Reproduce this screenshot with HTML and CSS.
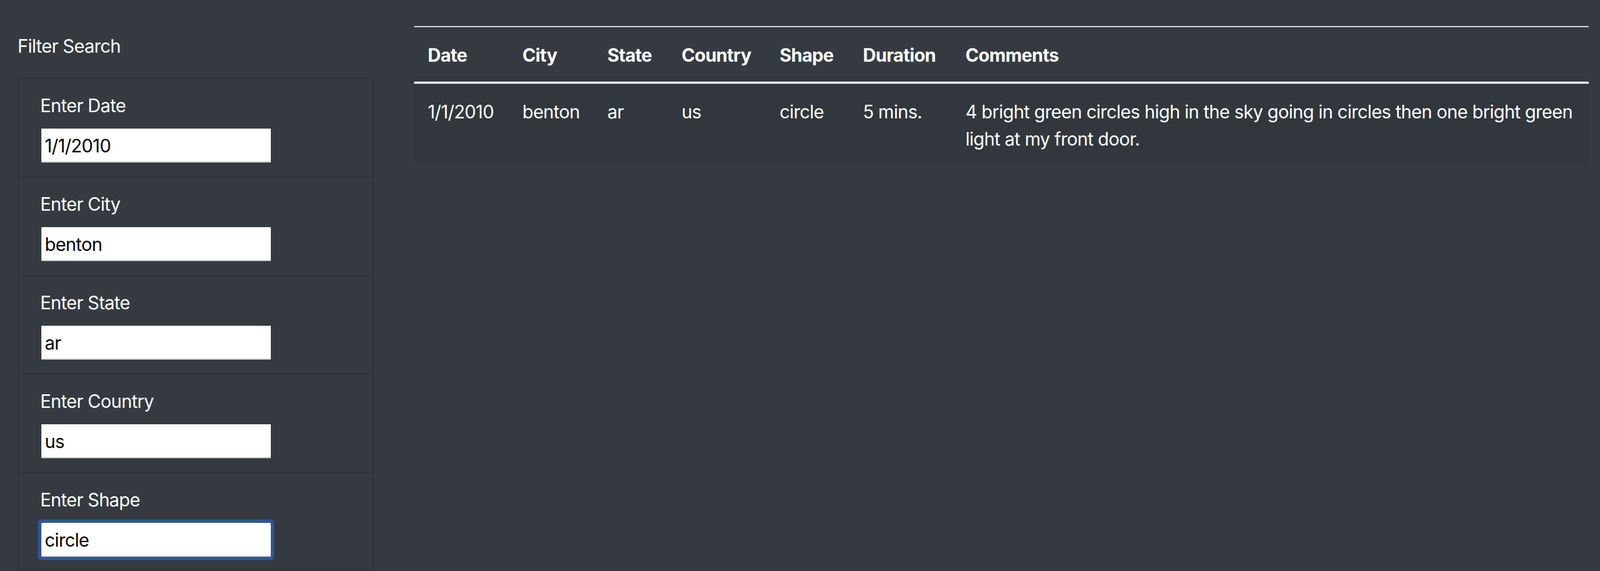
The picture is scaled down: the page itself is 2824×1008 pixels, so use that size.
FILE: index.html
```html
<!DOCTYPE html>
<html lang="en">
<head>
<meta charset="utf-8">
<title>UFO Sightings</title>
<link rel="stylesheet" href="styles.css">
</head>
<body>
<div class="page">
  <aside class="sidebar">
    <h5 class="sidebar-title">Filter Search</h5>
    <ul class="filters">
      <li class="filter">
        <label class="filter-label" for="datetime">Enter Date</label>
        <input class="filter-input" id="datetime" type="text" value="1/1/2010">
      </li>
      <li class="filter">
        <label class="filter-label" for="city">Enter City</label>
        <input class="filter-input" id="city" type="text" value="benton">
      </li>
      <li class="filter">
        <label class="filter-label" for="state">Enter State</label>
        <input class="filter-input" id="state" type="text" value="ar">
      </li>
      <li class="filter">
        <label class="filter-label" for="country">Enter Country</label>
        <input class="filter-input" id="country" type="text" value="us">
      </li>
      <li class="filter">
        <label class="filter-label" for="shape">Enter Shape</label>
        <input class="filter-input is-focused" id="shape" type="text" value="circle">
      </li>
    </ul>
  </aside>
  <main class="main">
    <table class="ufo-table">
      <colgroup>
        <col class="c-date"><col class="c-city"><col class="c-state"><col class="c-country"><col class="c-shape"><col class="c-duration"><col class="c-comments">
      </colgroup>
      <thead>
        <tr>
          <th>Date</th><th>City</th><th>State</th><th>Country</th><th>Shape</th><th>Duration</th><th>Comments</th>
        </tr>
      </thead>
      <tbody>
        <tr>
          <td>1/1/2010</td><td>benton</td><td>ar</td><td>us</td><td>circle</td><td>5 mins.</td>
          <td>4 bright green circles high in the sky going in circles then one bright green light at my front door.</td>
        </tr>
      </tbody>
    </table>
  </main>
</div>
</body>
</html>
```

FILE: styles.css
```css
html, body {
  margin: 0;
  padding: 0;
  background: #343a40;
  color: #fff;
  font-family: Inter, "Noto Sans", "Liberation Sans", sans-serif;
  font-size: 32px;
  line-height: 48px;
  letter-spacing: -0.7px;
}

.page {
  display: flex;
  align-items: flex-start;
  padding: 46px 20px 0 31px;
}

.sidebar {
  width: 629px;
  flex: none;
  padding-top: 12px;
}

.sidebar-title {
  margin: 0 0 31px 0;
  font-size: 32px;
  font-weight: 400;
  line-height: 48px;
}

.filters {
  list-style: none;
  margin: 0;
  padding: 0;
  border: 2px solid rgba(0, 0, 0, 0.125);
  border-radius: 8px;
}

.filter {
  padding: 24px 40px 24px 38px;
  border-bottom: 2px solid rgba(0, 0, 0, 0.125);
}

.filter:last-child {
  border-bottom: 0;
}

.filter-label {
  display: block;
  margin-bottom: 16px;
  line-height: 48px;
  padding-top: 1px;
  margin-top: -1px;
}

.filter-input {
  display: block;
  box-sizing: border-box;
  width: 405px;
  height: 60px;
  margin: 0 0 0 2px;
  padding: 0 6px;
  border: 0;
  background: #fff;
  box-shadow: inset 0 -2px 0 #c9c9c9;
  color: #000;
  font-family: inherit;
  font-size: 32px;
  letter-spacing: -0.7px;
  outline: none;
}

.filter-input.is-focused {
  border-radius: 2px;
  box-shadow: inset 0 -2px 0 #c9c9c9, 0 0 0 6px #2d5597;
}

.main {
  flex: 1;
  margin-left: 71px;
}

.ufo-table {
  width: 100%;
  table-layout: fixed;
  border-collapse: separate;
  border-spacing: 0;
}

.c-date { width: 167px; }
.c-city { width: 150px; }
.c-state { width: 131px; }
.c-country { width: 173px; }
.c-shape { width: 147px; }
.c-duration { width: 181px; }
.c-comments { width: auto; }

.ufo-table th,
.ufo-table td {
  padding: 26px 24px 22px 24px;
  text-align: left;
  vertical-align: top;
  line-height: 48px;
}

.ufo-table th {
  font-weight: 700;
  border-top: 2px solid #dee2e6;
  border-bottom: 4px solid #dee2e6;
}

.ufo-table tbody tr {
  background: rgba(0, 0, 0, 0.05);
}
```
